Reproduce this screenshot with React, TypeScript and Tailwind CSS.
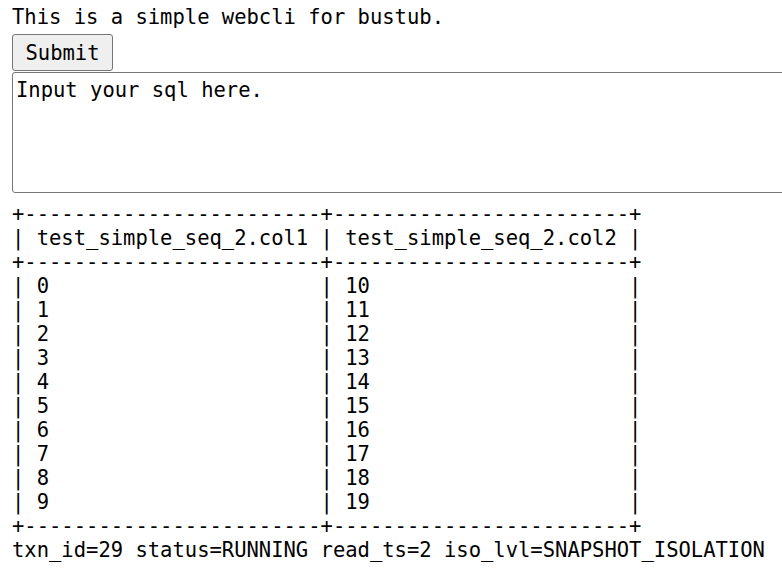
import React from "react";

export default function App() {
  const border = "+------------------------+------------------------+";
  const header = "| test_simple_seq_2.col1 | test_simple_seq_2.col2 |";
  const rows: string[] = [];
  for (let i = 0; i < 10; i++) {
    const a = String(i).padEnd(22, " ");
    const b = String(i + 10).padEnd(22, " ");
    rows.push(`| ${a} | ${b} |`);
  }
  const lines = [border, header, border, ...rows, border];
  return (
    <div className="w-[782px] h-[573px] overflow-hidden bg-white text-black text-[20.5px] leading-[24px] pl-[12px] pt-[5px] font-['DejaVu_Sans_Mono',monospace]">
      <div>This is a simple webcli for bustub.</div>
      <div className="mt-[5px]">
        <button className="h-[37px] w-[101px] bg-[#efefef] border border-[#767676] rounded-[3px] text-[20.5px] leading-[24px] text-black font-['DejaVu_Sans_Mono',monospace]">
          Submit
        </button>
      </div>
      <textarea
        className="block mt-[1px] w-[800px] h-[121px] border border-[#767676] rounded-[3px] px-[3px] pt-[5px] text-[20.5px] leading-[24px] resize-none outline-none text-black font-['DejaVu_Sans_Mono',monospace]"
        defaultValue="Input your sql here."
      />
      <pre className="mt-[9px] text-[20.5px] leading-[24px] font-['DejaVu_Sans_Mono',monospace]">
        {lines.join("\n")}
      </pre>
      <div>txn_id=29 status=RUNNING read_ts=2 iso_lvl=SNAPSHOT_ISOLATION</div>
    </div>
  );
}
